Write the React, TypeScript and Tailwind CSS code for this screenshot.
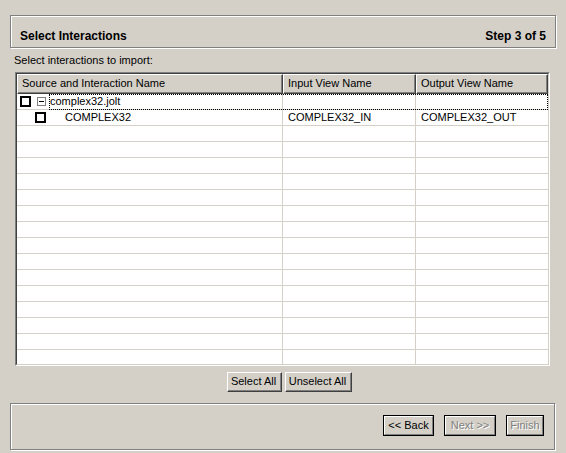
import React from "react";

const ROWS = 17;

function Check({ className = "" }: { className?: string }) {
  return <span className={`block h-[11px] w-[11px] border-2 border-black bg-white ${className}`} />;
}

function Expander() {
  return (
    <span className="flex h-[9px] w-[9px] items-center justify-center border border-[#808080] bg-white">
      <span className="block h-px w-[5px] bg-black" />
    </span>
  );
}

function HeaderCell({ label }: { label: string }) {
  return (
    <div className="flex h-[20px] items-center border border-t-white border-l-white border-r-[#404040] border-b-[#404040] bg-[#d4d0c8] pb-[1px] pl-[4px] shadow-[inset_-1px_-1px_0_#808080]">
      {label}
    </div>
  );
}

function WinButton({
  label,
  w,
  framed,
  disabled,
}: {
  label: string;
  w: string;
  framed?: boolean;
  disabled?: boolean;
}) {
  if (framed) {
    return (
      <div className={`h-[21px] ${w} border border-black`}>
        <div
          className={`flex h-full w-full items-center justify-center border border-t-white border-l-white border-r-[#808080] border-b-[#808080] bg-[#d4d0c8] ${
            disabled ? "text-[#808080] [text-shadow:1px_1px_0_#fff]" : "text-black"
          }`}
        >
          {label}
        </div>
      </div>
    );
  }
  return (
    <div className={`h-[20px] ${w} border border-t-white border-l-white border-r-[#404040] border-b-[#404040]`}>
      <div className="flex h-full w-full items-center justify-center border-r border-b border-[#808080] bg-[#d4d0c8] text-black">
        {label}
      </div>
    </div>
  );
}

export default function App() {
  const rows = Array.from({ length: ROWS }, (_, i) => i);
  return (
    <div className="h-[453px] w-[566px] overflow-hidden bg-[#d4d0c8] px-[10px] pt-[15px] font-['Liberation_Sans',Arial,sans-serif] text-[11px] leading-[13px] text-black">
      {/* wizard title */}
      <div className="flex h-[33px] w-[546px] items-end justify-between border border-[#808080] pb-[4px] pl-[9px] pr-[9px] text-[12px] leading-[14px] shadow-[inset_1px_1px_0_#fff,1px_1px_0_#fff]">
        <span className="font-bold">Select Interactions</span>
        <span className="font-bold">Step 3 of 5</span>
      </div>

      <div className="mt-[6px] pl-[4px]">Select interactions to import:</div>

      {/* table */}
      <div className="ml-[5px] mt-[5px] w-[535px] border border-t-[#808080] border-l-[#808080] border-r-white border-b-white">
        <div className="border border-t-[#404040] border-l-[#404040] border-r-[#d4d0c8] border-b-[#d4d0c8] bg-white">
          <div className="grid grid-cols-[266px_133px_132px]">
            <HeaderCell label="Source and Interaction Name" />
            <HeaderCell label="Input View Name" />
            <HeaderCell label="Output View Name" />
          </div>
          <div className="relative h-[270px] overflow-hidden">
            {rows.map((i) => (
              <div key={i} className="grid h-[16px] grid-cols-[266px_133px_132px] border-b border-[#d4d0c8]">
                <div className="flex items-center border-r border-[#d4d0c8]">
                  {i === 0 && (
                    <>
                      <Check className="ml-[3px]" />
                      <span className="ml-[6px]">
                        <Expander />
                      </span>
                      <span className="ml-[4px]">complex32.jolt</span>
                    </>
                  )}
                  {i === 1 && (
                    <>
                      <Check className="ml-[18px]" />
                      <span className="ml-[19px]">COMPLEX32</span>
                    </>
                  )}
                </div>
                <div className="flex items-center border-r border-[#d4d0c8] pl-[5px]">{i === 1 && "COMPLEX32_IN"}</div>
                <div className="flex items-center pl-[5px]">{i === 1 && "COMPLEX32_OUT"}</div>
              </div>
            ))}
            {/* focus rect on first row */}
            <div className="pointer-events-none absolute left-[32px] right-0 top-0 h-[16px] border border-dotted border-black" />
          </div>
        </div>
      </div>

      <div className="mt-[6px] flex justify-center gap-[3px] pl-[12px]">
        <WinButton label="Select All" w="w-[55px]" />
        <WinButton label="Unselect All" w="w-[67px]" />
      </div>

      {/* navigation */}
      <div className="mt-[11px] flex h-[47px] w-[545px] items-center justify-end gap-[10px] border border-[#808080] pb-[2px] pr-[10px] shadow-[inset_1px_1px_0_#fff,1px_1px_0_#fff]">
        <WinButton label="<< Back" w="w-[51px]" framed />
        <WinButton label="Next >>" w="w-[52px]" framed disabled />
        <WinButton label="Finish" w="w-[38px]" framed disabled />
      </div>
    </div>
  );
}
